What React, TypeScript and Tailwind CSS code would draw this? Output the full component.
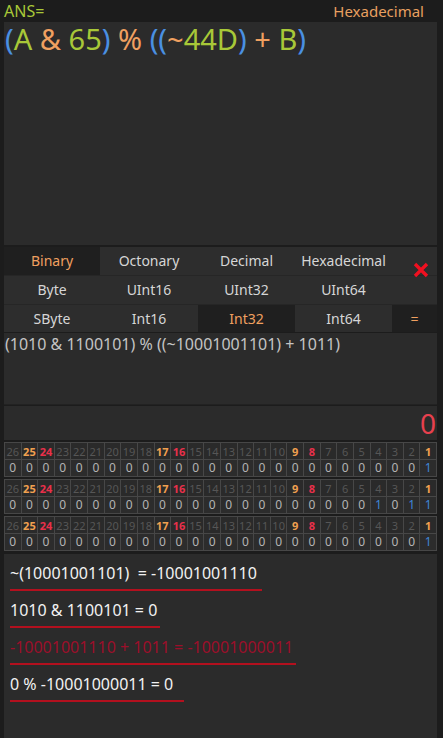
import React from "react";

const font = { fontFamily: '"Noto Sans", "Open Sans", sans-serif' };

const bits = Array.from({ length: 26 }, (_, i) => 26 - i);
const orangeBits = new Set([25, 17, 9, 1]);
const redBits = new Set([24, 16, 8]);

function BitGroup({ ones }: { ones: number[] }) {
  return (
    <div className="grid grid-cols-[repeat(26,minmax(0,1fr))] border-l border-t border-[#474747]">
      {bits.map((b) => (
        <div
          key={"h" + b}
          className={
            "h-[17px] flex items-center justify-center border-r border-b border-[#474747] bg-[#2a2a2a] text-[11px] leading-none " +
            (orangeBits.has(b)
              ? "text-[#f0a050] font-bold"
              : redBits.has(b)
              ? "text-[#e8304a] font-bold"
              : "text-[#565656]")
          }
        >
          {b}
        </div>
      ))}
      {bits.map((b) => (
        <div
          key={"v" + b}
          className={
            "h-[17px] flex items-center justify-center border-r border-b border-[#474747] bg-[#2c2c2c] text-[12px] leading-none " +
            (ones.includes(b) ? "text-[#3f86d8]" : "text-[#b4b4b4]")
          }
        >
          {ones.includes(b) ? "1" : "0"}
        </div>
      ))}
    </div>
  );
}

function Cell({
  children,
  active,
}: {
  children: React.ReactNode;
  active?: boolean;
}) {
  return (
    <div
      className={
        "flex items-center justify-center text-[14px] " +
        (active ? "bg-[#1f1f1f] text-[#f0a060]" : "bg-[#2d2d2d] text-[#d6d6d6]")
      }
    >
      {children}
    </div>
  );
}

function Step({
  text,
  red,
  w,
}: {
  text: string;
  red?: boolean;
  w: string;
}) {
  return (
    <div className="flex flex-col items-start">
      <div
        className={
          "text-[16px] leading-[24px] whitespace-pre " +
          (red ? "text-[#9c0f2a]" : "text-[#f2f2f2]")
        }
      >
        {text}
      </div>
      <div className={"h-[2px] mt-[4px] bg-[#b3101e] " + w} />
    </div>
  );
}

export default function App() {
  const B = "text-[#4a90e2]";
  const G = "text-[#a8c838]";
  const O = "text-[#f0a060]";
  return (
    <div
      className="w-[443px] h-[738px] bg-[#1c1c1c] pl-[4px] pr-[6px] flex flex-col overflow-hidden"
      style={font}
    >
      <div className="h-[22px] flex items-center justify-between pr-[13px]">
        <span className="text-[#a8c838] text-[16px]">ANS=</span>
        <span className="text-[#e8a060] text-[15px]">Hexadecimal</span>
      </div>
      <div className="h-[223px] bg-[#2b2b2b]">
        <div className="text-[29px] leading-[34px] pl-[1px] whitespace-pre">
          <span className={B}>(</span>
          <span className={G}>A </span>
          <span className={O}>&amp; </span>
          <span className={G}>65</span>
          <span className={B}>)</span>
          <span className={O}> % </span>
          <span className={B}>((</span>
          <span className={O}>~</span>
          <span className={G}>44D</span>
          <span className={B}>)</span>
          <span className={O}> + </span>
          <span className={G}>B</span>
          <span className={B}>)</span>
        </div>
      </div>
      <div className="relative mt-[2px] grid grid-cols-[96px_98px_97px_97px_45px] grid-rows-[28px_28px_27px] gap-y-px bg-[#262626]">
        <Cell active>Binary</Cell>
        <Cell>Octonary</Cell>
        <Cell>Decimal</Cell>
        <Cell>Hexadecimal</Cell>
        <div className="bg-[#2d2d2d]" />
        <Cell>Byte</Cell>
        <Cell>UInt16</Cell>
        <Cell>UInt32</Cell>
        <Cell>UInt64</Cell>
        <div className="bg-[#2d2d2d]" />
        <Cell>SByte</Cell>
        <Cell>Int16</Cell>
        <Cell active>Int32</Cell>
        <Cell>Int64</Cell>
        <Cell active>=</Cell>
        <svg
          className="absolute left-[409px] top-[15px]"
          width="16"
          height="16"
          viewBox="0 0 16 16"
        >
          <path
            d="M2 2 L14 14 M14 2 L2 14"
            stroke="#f01020"
            strokeWidth="3.4"
            strokeLinecap="butt"
          />
        </svg>
      </div>
      <div className="mt-[1px] h-[73px] bg-[#2b2b2b] border-b border-[#222]">
        <div className="text-[16px] text-[#c4c4c4] leading-[22px] pl-[1px] whitespace-pre">
          (1010 &amp; 1100101) % ((~10001001101) + 1011)
        </div>
      </div>
      <div className="mt-[1px] h-[34px] bg-[#2b2b2b] flex items-center justify-end pr-[1px]">
        <span className="text-[28px] leading-none text-[#e8404e]">0</span>
      </div>
      <div className="mt-[2px] flex flex-col gap-[2px]">
        <BitGroup ones={[1]} />
        <BitGroup ones={[4, 2, 1]} />
        <BitGroup ones={[1]} />
      </div>
      <div className="mt-[3px] h-[184px] bg-[#2b2b2b] pl-[6px] pt-[7px] flex flex-col gap-[7px]">
        <Step text="~(10001001101)  = -10001001110" w="w-[252px]" />
        <Step text="1010 & 1100101 = 0" w="w-[150px]" />
        <Step text="-10001001110 + 1011 = -10001000011" red w="w-[286px]" />
        <Step text="0 % -10001000011 = 0" w="w-[174px]" />
      </div>
    </div>
  );
}
